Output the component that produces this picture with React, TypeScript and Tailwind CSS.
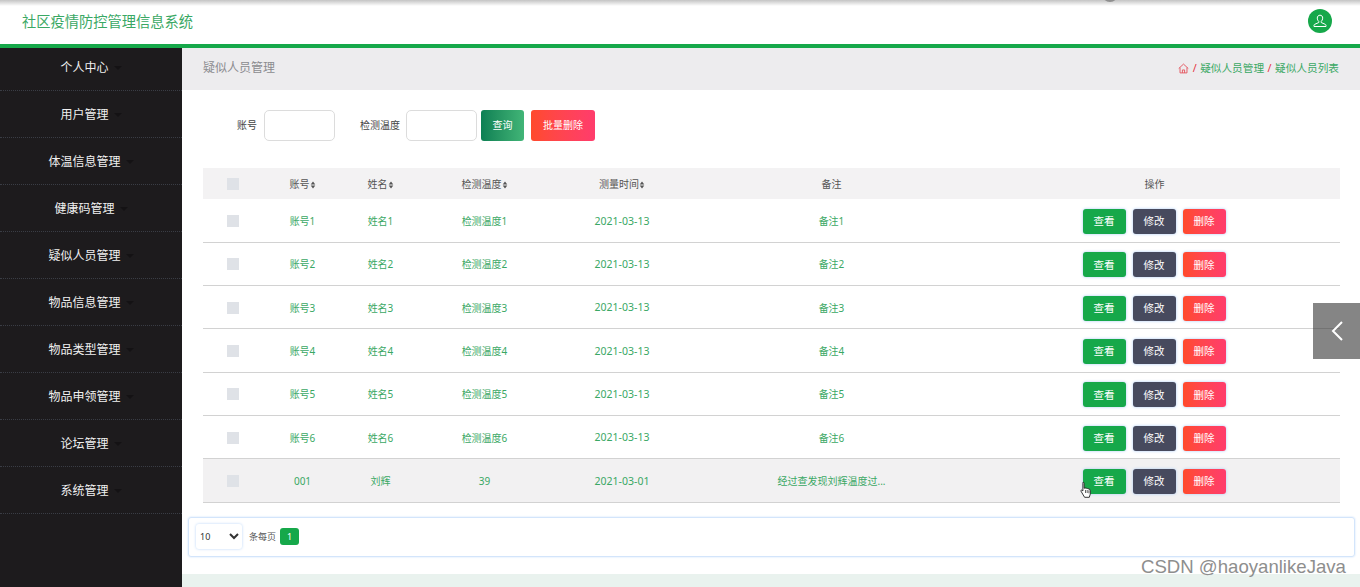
import React from "react";

const FONT = "font-['Noto_Sans','Noto_Sans_CJK_SC',sans-serif]";
const menu = ["个人中心", "用户管理", "体温信息管理", "健康码管理", "疑似人员管理", "物品信息管理", "物品类型管理", "物品申领管理", "论坛管理", "系统管理"];
const rows = [
  ["账号1", "姓名1", "检测温度1", "2021-03-13", "备注1"],
  ["账号2", "姓名2", "检测温度2", "2021-03-13", "备注2"],
  ["账号3", "姓名3", "检测温度3", "2021-03-13", "备注3"],
  ["账号4", "姓名4", "检测温度4", "2021-03-13", "备注4"],
  ["账号5", "姓名5", "检测温度5", "2021-03-13", "备注5"],
  ["账号6", "姓名6", "检测温度6", "2021-03-13", "备注6"],
  ["001", "刘辉", "39", "2021-03-01", "经过查发现刘辉温度过..."],
];

function Sort() {
  return (
    <svg width="6" height="8" viewBox="0 0 5 8" className="inline-block align-[-0.5px]">
      <path d="M2.5 0.4 L4.8 3.4 H0.2 Z M2.5 7.6 L4.8 4.6 H0.2 Z" fill="#555" />
    </svg>
  );
}

function Check() {
  return <span className="mx-auto block h-3 w-3 bg-[#dfe2e7]" />;
}

function ActionButton({ label, className }: { label: string; className: string }) {
  return (
    <button className={`h-[25px] w-[43px] rounded-[3px] pt-px text-[10.5px] text-white shadow-[0_0_3px_#a9c9f5] ${className}`}>
      {label}
    </button>
  );
}

export default function App() {
  return (
    <div className={`${FONT} relative h-[587px] w-[1360px] overflow-hidden bg-white`}>
      <header className="relative h-[48px] overflow-hidden border-b-4 border-[#16a84a] bg-white">
        <div className="h-[6px] bg-gradient-to-b from-[#c4c4c4] to-white" />
        <div className="flex h-[34px] items-center justify-between pl-[22px] pr-[28px]">
          <span className="-mt-[2px] text-[14.25px] leading-none text-[#3aa864]">社区疫情防控管理信息系统</span>
          <span className="-mt-[4px] flex h-6 w-6 items-center justify-center rounded-full bg-[#16a84a]">
            <svg width="14" height="14" viewBox="0 0 14 14" fill="none" stroke="#fff" strokeWidth="1">
              <path d="M7 1.2c-1.7 0-2.7 1.2-2.7 2.9 0 1.4.6 2.600 1.500 3.400v1L1.600 10.400c-.4.2-.6.5-.6.9v1.200h12v-1.200c0-.4-.2-.7-.6-.9L8.200 8.500v-1c.9-.8 1.500-2 1.500-3.400 0-1.700-1-2.900-2.700-2.900Z" />
            </svg>
          </span>
        </div>
        <span className="absolute left-[1102px] top-[-14px] h-[16px] w-[16px] rounded-full bg-[#8f8f8f]" />
      </header>

      <div className="flex h-[539px]">
        <aside className="w-[182px] shrink-0 bg-[#1d1b1d]">
          {menu.map((m, i) => (
            <div key={m} className={`flex items-center justify-center border-b border-dotted border-[#3a3d45] text-[12px] text-[#f0f0f0] ${i === 0 ? "h-[43px] pb-[3px]" : "h-[47px] pt-[2px]"}`}>
              <span>{m}</span>
              <svg width="8" height="4" viewBox="0 0 8 4" className="ml-[5px]">
                <path d="M0 0h8L4 4Z" fill="#141214" />
              </svg>
            </div>
          ))}
        </aside>

        <main className="relative flex min-w-0 flex-1 flex-col">
          <div className="flex h-[42px] items-center justify-between bg-[#edecee] pb-[2px] pl-[21px] pr-[21px]">
            <span className="text-[12px] text-[#8b8b8e]">疑似人员管理</span>
            <span className="flex items-center text-[10.67px] text-[#3aa864]">
              <svg width="11" height="11" viewBox="0 0 12 12" fill="none" stroke="#e4525c" strokeWidth="1">
                <path d="M0.8 6 6 1.2 11.2 6M2.2 5v5.800h7.600V5M4.800 10.800V7.600h2.400v3.200" />
              </svg>
              <span className="mx-[3.5px] text-[#e5323e]">/</span>
              <span>疑似人员管理</span>
              <span className="mx-[3.5px] text-[#e5323e]">/</span>
              <span>疑似人员列表</span>
            </span>
          </div>

          <div className="flex h-[78px] items-start pl-[55px] pt-[20px] text-[10px] text-[#444]">
            <span className="flex h-[31px] items-center">账号</span>
            <input className="ml-[7px] h-[31px] w-[71px] rounded-[5px] border border-[#dcdcdc] bg-white" />
            <span className="ml-[25px] flex h-[31px] items-center">检测温度</span>
            <input className="ml-[6px] h-[31px] w-[71px] rounded-[5px] border border-[#dcdcdc] bg-white" />
            <button className="ml-[4px] h-[31px] w-[43px] rounded-[3px] bg-gradient-to-r from-[#0b8054] to-[#41b577] text-[10px] text-white">查询</button>
            <button className="ml-[7px] h-[31px] w-[64px] rounded-[3px] bg-gradient-to-r from-[#ff4a2b] to-[#ff3c6c] text-[10px] text-white">批量删除</button>
          </div>

          <div className="pl-[21px] pr-[20px]">
            <table className="w-full table-fixed border-collapse text-center text-[10px]">
              <colgroup>
                <col className="w-[60px]" />
                <col className="w-[79px]" />
                <col className="w-[77px]" />
                <col className="w-[131px]" />
                <col className="w-[144px]" />
                <col className="w-[275px]" />
                <col />
              </colgroup>
              <thead>
                <tr className="h-[31px] bg-[#f3f2f3] text-[#555]">
                  <th className="font-normal"><Check /></th>
                  <th className="pt-[2px] font-normal">账号<Sort /></th>
                  <th className="pt-[2px] font-normal">姓名<Sort /></th>
                  <th className="pt-[2px] font-normal">检测温度<Sort /></th>
                  <th className="pt-[2px] font-normal">测量时间<Sort /></th>
                  <th className="pt-[2px] font-normal">备注</th>
                  <th className="pt-[2px] font-normal">操作</th>
                </tr>
              </thead>
              <tbody>
                {rows.map((r, i) => (
                  <tr key={r[0]} className={`h-[43.33px] border-b border-[#d2d2d2] text-[#3aa864] ${i === 6 ? "bg-[#f2f1f2]" : "bg-white"}`}>
                    <td className="pt-[1px]"><Check /></td>
                    {r.map((c, j) => (
                      <td key={j} className={`pt-[2px] ${j === 3 ? "text-[10.5px]" : ""}`}>{c}</td>
                    ))}
                    <td className="pt-[2px]">
                      <div className="flex items-center justify-center gap-[7px] pr-[1px]">
                        <ActionButton label="查看" className="bg-[#16a84a]" />
                        <ActionButton label="修改" className="bg-[#474a5e]" />
                        <ActionButton label="删除" className="bg-gradient-to-r from-[#ff4a2b] to-[#ff3c6c]" />
                      </div>
                    </td>
                  </tr>
                ))}
              </tbody>
            </table>
          </div>

          <div className="ml-[6px] mr-[5px] mt-[14px] flex h-[40px] items-center rounded-[3px] border border-[#d3e5fb] pl-[7px] text-[9px] text-[#555] shadow-[0_0_2px_#c5dcfa]">
            <select defaultValue="10" className="h-[25px] w-[46px] rounded-[3px] bg-white text-[9px] text-[#333] shadow-[0_0_3px_#b9d5f8]">
              <option value="10">10</option>
            </select>
            <span className="ml-[7px]">条每页</span>
            <span className="ml-[4px] flex h-[17px] w-[19px] items-center justify-center rounded-[3px] bg-[#16a84a] text-white">1</span>
          </div>

          <div className="mt-auto h-[13px] bg-[#e9f2ee]" />
        </main>
      </div>

      <div className="absolute left-[1313px] top-[303px] flex h-[56px] w-[47px] items-center justify-center bg-[#333]/60">
        <svg width="14" height="22" viewBox="0 0 14 22" fill="none" stroke="#fff" strokeWidth="2">
          <path d="M12 2 3 11l9 9" />
        </svg>
      </div>

      <svg className="absolute left-[1080px] top-[481px]" width="13" height="17" viewBox="0 0 13 17">
        <path d="M3 1.200c.7 0 1.100.4 1.100 1v5l1-.2 1.200.2 1.200.3 1.600.5c.8.3 1.200.9 1.200 1.700v3.300l-1 3.300H4.600L1 10.200c-.4-.7.3-1.400 1-1l.9.7V2.200c0-.6 0-1 .1-1Z" fill="#fff" stroke="#222" strokeWidth="0.9" />
        <path d="M5.500 9v3M7.200 9v3M8.900 9.300v3" stroke="#222" strokeWidth="0.7" />
      </svg>

      <span className="absolute left-[1141px] top-[556px] font-['Liberation_Sans',sans-serif] text-[18.6px] leading-[22px] text-[#8e8e8e]">
        CSDN @haoyanlikeJava
      </span>
    </div>
  );
}
